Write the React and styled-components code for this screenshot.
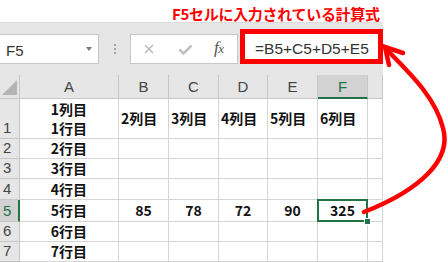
import React from 'react';
import styled, { createGlobalStyle, css } from 'styled-components';

const GlobalStyle = createGlobalStyle`
  html, body {
    margin: 0;
    padding: 0;
    background: #ffffff;
  }
  * {
    box-sizing: border-box;
  }
`;

const GREEN = '#217346';
const JP = `"Noto Sans CJK JP", "Noto Sans", sans-serif`;
const UI = `"Liberation Sans", Arial, sans-serif`;

const Page = styled.div`
  position: relative;
  width: 448px;
  height: 262px;
  overflow: hidden;
  background: #ffffff;
`;

const Caption = styled.div`
  height: 22px;
  padding: 6px 0 0 172px;
  font-family: ${JP};
  font-weight: 700;
  font-size: 15px;
  line-height: 16px;
  letter-spacing: -0.3px;
  color: #ff0000;
  white-space: nowrap;
`;

const Workbook = styled.div`
  width: 383px;
  height: 240px;
  background: #e6e6e6;
  border-top: 1px solid #dcdcdc;
  overflow: hidden;
`;

const FormulaBar = styled.div`
  height: 52px;
  display: flex;
  align-items: flex-end;
  padding-bottom: 11px;
`;

const NameBox = styled.div`
  width: 100px;
  height: 30px;
  margin-left: -1px;
  display: flex;
  align-items: center;
  padding: 3px 6px 0 6px;
  background: #ffffff;
  border: 1px solid #c6c6c6;
  font-family: ${UI};
  font-size: 15px;
  color: #333333;
`;

const Caret = styled.span`
  margin-left: auto;
  width: 0;
  height: 0;
  border-left: 3.5px solid transparent;
  border-right: 3.5px solid transparent;
  border-top: 4px solid #7a7a7a;
  margin-top: -3px;
`;

const Grip = styled.div`
  width: 31px;
  height: 30px;
  display: flex;
  flex-direction: column;
  align-items: center;
  justify-content: center;
  gap: 2px;
  span {
    width: 2px;
    height: 2px;
    background: #a6a6a6;
  }
`;

const FxBox = styled.div`
  width: 108px;
  height: 30px;
  margin-right: 2px;
  display: flex;
  align-items: center;
  padding-left: 13px;
  background: #ffffff;
  border: 1px solid #c6c6c6;
`;

const ToolIcon = styled.svg`
  display: block;
  margin-right: ${p => p.$gap}px;
`;

const Fx = styled.span`
  font-family: "Liberation Serif", "Times New Roman", serif;
  font-style: italic;
  font-size: 17px;
  color: #555555;
  margin-top: -3px;
  letter-spacing: -0.5px;
  small {
    font-size: 13px;
  }
`;

const FormulaBox = styled.div`
  width: 143px;
  height: 35px;
  display: flex;
  align-items: center;
  padding: 5px 0 0 10px;
  background: #ffffff;
  border: 5px solid #ff0000;
  font-family: ${UI};
  font-size: 15.5px;
  color: #333333;
  white-space: nowrap;
`;

const Sheet = styled.div`
  display: grid;
  grid-template-columns: 20px 99px 50px 50px 49px 50px 50px 15px;
  grid-template-rows: 24px 40px 20px 20px 21px 22px 20px 20px;
  background: #ffffff;
`;

const Corner = styled.div`
  position: relative;
  background: #e6e6e6;
  border-right: 1px solid #c6c6c6;
  border-bottom: 1px solid #c6c6c6;
  svg {
    position: absolute;
    left: 2px;
    bottom: 3px;
  }
`;

const ColHead = styled.div`
  display: flex;
  align-items: center;
  justify-content: center;
  background: ${p => (p.$active ? '#d2d2d2' : '#e6e6e6')};
  border-right: 1px solid #c6c6c6;
  border-bottom: ${p => (p.$active ? `2px solid ${GREEN}` : '1px solid #c6c6c6')};
  font-family: ${UI};
  font-size: 15px;
  color: ${p => (p.$active ? GREEN : '#444444')};
`;

const RowHead = styled.div`
  display: flex;
  align-items: flex-end;
  padding: 0 0 3px 3px;
  background: ${p => (p.$active ? '#d2d2d2' : '#e6e6e6')};
  border-right: ${p => (p.$active ? `2px solid ${GREEN}` : '1px solid #c6c6c6')};
  border-bottom: 1px solid #c6c6c6;
  font-family: ${UI};
  font-size: 15px;
  line-height: 15px;
  color: ${p => (p.$active ? GREEN : '#444444')};
`;

const Cell = styled.div`
  position: relative;
  display: flex;
  flex-direction: column;
  justify-content: center;
  align-items: ${p => (p.$center ? 'center' : 'flex-start')};
  padding: 0 2px;
  border-right: 1px solid #d4d4d4;
  border-bottom: 1px solid #d4d4d4;
  font-family: ${JP};
  font-weight: 700;
  font-size: 14px;
  line-height: 19px;
  color: #111111;
  white-space: nowrap;
  ${p => p.$selected && css`
    &::after {
      content: '';
      position: absolute;
      top: -1px;
      left: -1px;
      right: -1px;
      bottom: -1px;
      border: 2px solid ${GREEN};
    }
  `}
`;

const FillHandle = styled.span`
  position: absolute;
  right: -4px;
  bottom: -4px;
  width: 7px;
  height: 7px;
  background: ${GREEN};
  border: 1px solid #ffffff;
  z-index: 2;
`;

const Arrow = styled.svg`
  position: absolute;
  left: 0;
  top: 0;
  pointer-events: none;
  z-index: 5;
`;

const columns = ['A', 'B', 'C', 'D', 'E', 'F', ''];

const rows = [
  { n: 1, a: ['1列目', '1行目'], cells: ['2列目', '3列目', '4列目', '5列目', '6列目'] },
  { n: 2, a: ['2行目'] },
  { n: 3, a: ['3行目'] },
  { n: 4, a: ['4行目'] },
  { n: 5, a: ['5行目'], cells: [85, 78, 72, 90, 325], numeric: true, active: true },
  { n: 6, a: ['6行目'] },
  { n: 7, a: ['7行目'] },
];

const App = () => {
  return (
    <Page>
      <GlobalStyle />
      <Caption>F5セルに入力されている計算式</Caption>
      <Workbook>
        <FormulaBar>
          <NameBox>
            F5
            <Caret />
          </NameBox>
          <Grip>
            <span />
            <span />
            <span />
          </Grip>
          <FxBox>
            <ToolIcon width="10" height="10" viewBox="0 0 10 10" $gap={24}>
              <path d="M1 1 L9 9 M9 1 L1 9" stroke="#b8b8b8" strokeWidth="1.4" fill="none" />
            </ToolIcon>
            <ToolIcon width="15" height="11" viewBox="0 0 15 11" $gap={21}>
              <path d="M1.5 5.5 L5.5 9.5 L13.5 1.5" stroke="#c0c0c0" strokeWidth="2.6" fill="none" />
            </ToolIcon>
            <Fx>f<small>x</small></Fx>
          </FxBox>
          <FormulaBox>=B5+C5+D5+E5</FormulaBox>
        </FormulaBar>
        <Sheet>
          <Corner>
            <svg width="15" height="15" viewBox="0 0 15 15">
              <polygon points="0,15 15,15 15,0" fill="#b4b4b4" />
            </svg>
          </Corner>
          {columns.map((c, i) => (
            <ColHead key={i} $active={c === 'F'}>{c}</ColHead>
          ))}
          {rows.map(r => (
            <React.Fragment key={r.n}>
              <RowHead $active={r.active}>{r.n}</RowHead>
              <Cell $center>
                {r.a.map(t => (
                  <span key={t}>{t}</span>
                ))}
              </Cell>
              {[0, 1, 2, 3, 4].map(i => {
                const selected = r.active && i === 4;
                return (
                  <Cell key={i} $center={r.numeric} $selected={selected}>
                    {r.cells ? r.cells[i] : ''}
                    {selected && <FillHandle />}
                  </Cell>
                );
              })}
              <Cell />
            </React.Fragment>
          ))}
        </Sheet>
      </Workbook>
      <Arrow width="448" height="262" viewBox="0 0 448 262">
        <path
          d="M364 212 C420 190 452 160 443 128 C436 100 415 78 387 50"
          stroke="#ff0000"
          strokeWidth="4.5"
          fill="none"
          strokeLinecap="round"
        />
        <path
          d="M403 53 L385 47 L389 65"
          stroke="#ff0000"
          strokeWidth="4.5"
          fill="none"
          strokeLinecap="round"
          strokeLinejoin="miter"
        />
      </Arrow>
    </Page>
  );
};

export default App;
